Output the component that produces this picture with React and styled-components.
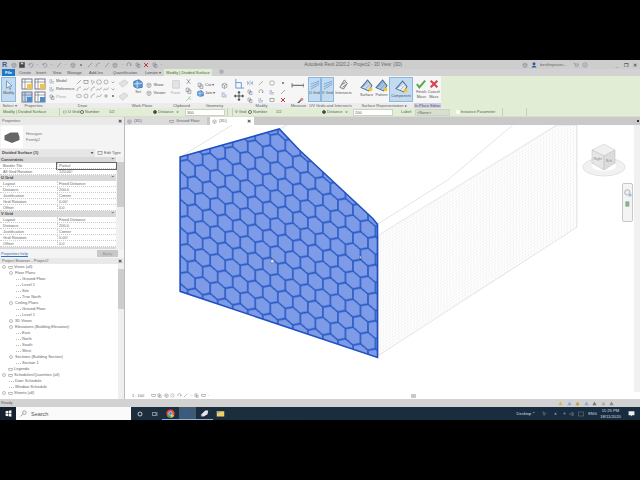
import React from 'react';
import styled, { createGlobalStyle } from 'styled-components';

const GlobalStyle = createGlobalStyle`
  html, body { margin: 0; padding: 0; background: #000; }
  * { box-sizing: border-box; }
`;

const Page = styled.div`
  width: 640px;
  height: 480px;
  background: #000;
  padding: 60px 0;
  overflow: hidden;
  font-family: "Liberation Sans", Arial, sans-serif;
  font-size: 4px;
  line-height: 6px;
  color: #5c5c5c;
`;

const Screen = styled.div`
  height: 360px;
  display: flex;
  flex-direction: column;
  background: #fff;
`;

/* title bar */
const TitleBar = styled.div`
  height: 9px;
  background: #cdcdcd;
  display: flex;
  align-items: center;
  padding: 0 2px;
  gap: 3px;
`;
const Logo = styled.span`
  font: bold 7px/9px "Liberation Sans", sans-serif;
  color: #2a5fa8;
  width: 6px;
`;
const Qat = styled.div`
  display: flex;
  align-items: center;
  gap: 2.5px;
  width: 292px;
`;
const WindowTitle = styled.div`
  width: 216px;
  font-size: 4.5px;
  color: #666;
  white-space: nowrap;
`;
const TitleRight = styled.div`
  display: flex;
  align-items: center;
  gap: 3px;
  flex: 1;
`;
const UserName = styled.span`
  width: 30px;
  white-space: nowrap;
  overflow: hidden;
  color: #666;
`;
const TitleGap = styled.span`
  width: 20px;
`;
const WindowButton = styled.span`
  width: 6px;
  text-align: center;
  font: bold 5px/8px "Liberation Sans", sans-serif;
  color: #555;
`;

/* ribbon tabs */
const TabRow = styled.div`
  height: 7px;
  background: #d2d2d2;
  display: flex;
  align-items: stretch;
  padding-left: 2px;
`;
const RibbonTab = styled.div`
  width: ${(p) => p.$w}px;
  text-align: center;
  line-height: 7px;
  white-space: nowrap;
  color: ${(p) => (p.$file ? '#fff' : '#555')};
  background: ${(p) => (p.$file ? '#1d78c8' : p.$context ? '#e2edd6' : 'transparent')};
  font-weight: ${(p) => (p.$file ? 'bold' : 'normal')};
`;

/* ribbon */
const Ribbon = styled.div`
  height: 32px;
  display: flex;
  background: #f6f6f6;
`;
const Panel = styled.div`
  width: ${(p) => p.$w}px;
  display: flex;
  flex-direction: column;
`;
const PanelBody = styled.div`
  flex: 1;
  display: flex;
  gap: ${(p) => p.$gap ?? 1}px;
  padding: 1px 1px 0;
  justify-content: ${(p) => p.$justify ?? 'flex-start'};
  overflow: hidden;
`;
const PanelTitle = styled.div`
  height: 5px;
  line-height: 5px;
  text-align: center;
  white-space: nowrap;
  color: #5c5c5c;
  background: ${(p) => (p.$editor ? '#cfcfe6' : '#ececec')};
`;
const RibbonRest = styled.div`
  flex: 1;
  background: #e2edd6;
`;
const BigTool = styled.div`
  width: ${(p) => p.$w}px;
  height: 25px;
  display: flex;
  flex-direction: column;
  align-items: center;
  gap: 1px;
  padding-top: 2px;
  text-align: center;
  line-height: 4.6px;
  font-size: 3.8px;
  color: #555;
  background: ${(p) => (p.$on ? '#c3dbf1' : 'transparent')};
  border: ${(p) => (p.$on ? '1px solid #8db8de' : '0')};
  white-space: pre-line;
`;
const IconGrid = styled.div`
  display: grid;
  grid-template-columns: repeat(${(p) => p.$cols}, ${(p) => p.$size}px);
  grid-auto-rows: ${(p) => p.$size}px;
  gap: ${(p) => p.$gap ?? 1}px ${(p) => p.$colGap ?? p.$gap ?? 1}px;
  align-content: start;
  padding-top: ${(p) => p.$top ?? 1}px;
`;
const SmallStack = styled.div`
  width: ${(p) => p.$w}px;
  display: flex;
  flex-direction: column;
  gap: 1.5px;
  padding-top: ${(p) => p.$top ?? 1}px;
`;
const SmallTool = styled.div`
  display: flex;
  align-items: center;
  gap: 1px;
  height: 6.5px;
  white-space: nowrap;
  color: ${(p) => (p.$dim ? '#aaa' : '#555')};
`;

/* options bar */
const OptionsBar = styled.div`
  height: 9px;
  background: #e2edd6;
  display: flex;
  align-items: center;
  padding-left: 3px;
  border-bottom: 1px solid #d5dfca;
`;
const OptText = styled.span`
  width: ${(p) => p.$w}px;
  padding-left: ${(p) => p.$pl ?? 0}px;
  white-space: nowrap;
  flex: none;
`;
const OptSep = styled.span`
  width: 1px;
  height: 8px;
  background: #c5cfbb;
  flex: none;
  margin: 0 ${(p) => p.$m ?? 3}px;
`;
const Radio = styled.span`
  width: 4px;
  height: 4px;
  border-radius: 50%;
  border: 1px solid #666;
  background: ${(p) => (p.$on ? '#333' : '#fff')};
  margin-right: 1px;
  flex: none;
`;
const OptInput = styled.span`
  width: ${(p) => p.$w}px;
  height: 7px;
  background: ${(p) => p.$bg ?? '#fff'};
  border: 1px solid #ccd3c4;
  line-height: 5px;
  padding-left: 1px;
  flex: none;
`;
const Check = styled.span`
  width: 3.5px;
  height: 3.5px;
  background: #fbfbf0;
  flex: none;
  margin-right: 1px;
`;

/* body */
const Body = styled.div`
  flex: 1;
  min-height: 0;
  display: flex;
`;
const Sidebar = styled.div`
  width: 125px;
  flex: none;
  display: flex;
  flex-direction: column;
  background: #f4f4f4;
  border-right: 1px solid #bbb;
`;
const SideHeader = styled.div`
  height: ${(p) => p.$h}px;
  flex: none;
  display: flex;
  align-items: center;
  justify-content: space-between;
  padding: 0 2px;
  background: #e9e9e9;
  color: #666;
`;
const CloseMark = styled.span`
  font: bold 5px/6px "Liberation Sans", sans-serif;
  color: #333;
`;
const TypeBox = styled.div`
  height: 23px;
  flex: none;
  display: flex;
  align-items: center;
  gap: 3px;
  padding-left: 1px;
`;
const TypePreview = styled.div`
  width: 22px;
  height: 22px;
  background: #fff;
  display: flex;
  align-items: center;
  justify-content: center;
`;
const TypeName = styled.div`
  flex: 1;
  color: #777;
`;
const InstanceRow = styled.div`
  height: 9px;
  flex: none;
  display: flex;
  align-items: center;
  gap: 2px;
  padding-right: 3px;
`;
const InstanceSelect = styled.div`
  width: 95px;
  height: 8px;
  display: flex;
  justify-content: space-between;
  align-items: center;
  padding: 0 2px;
  background: #e6e6e6;
  font-weight: bold;
  color: #444;
`;
const EditType = styled.div`
  display: flex;
  align-items: center;
  gap: 1px;
  white-space: nowrap;
`;
const PropsTable = styled.div`
  height: 92px;
  flex: none;
  display: flex;
  overflow: hidden;
`;
const PropsRows = styled.div`
  flex: 1;
  padding-right: 1px;
`;
const GroupRow = styled.div`
  height: 6px;
  line-height: 6px;
  padding-left: 1px;
  font-weight: bold;
  background: #d9d9d9;
  color: #444;
  display: flex;
  justify-content: space-between;
  padding-right: 2px;
`;
const PropRow = styled.div`
  height: 6px;
  display: grid;
  grid-template-columns: 57px 1fr;
  background: #fff;
  border-bottom: 1px dotted #ccc;
  line-height: 5.5px;
`;
const PropLabel = styled.span`
  padding-left: 3px;
  color: #666;
`;
const PropValue = styled.span`
  padding-left: 1px;
  color: #666;
  border-left: 1px dotted #ccc;
  outline: ${(p) => (p.$focus ? '1px solid #666' : 'none')};
`;
const Scroll = styled.div`
  width: ${(p) => p.$w}px;
  flex: none;
  background: #efefef;
  display: flex;
  flex-direction: column;
  align-items: stretch;
  justify-content: flex-start;
  padding-top: ${(p) => p.$top}px;
`;
const ScrollThumb = styled.div`
  height: ${(p) => p.$h}px;
  background: #cdcdcd;
`;
const ApplyRow = styled.div`
  height: 9px;
  flex: none;
  display: flex;
  align-items: center;
  justify-content: space-between;
  padding: 0 6px 0 1px;
  background: #f4f4f4;
`;
const HelpLink = styled.span`
  color: #2f6fc0;
  text-decoration: underline;
`;
const ApplyButton = styled.span`
  width: 21px;
  height: 7px;
  background: #c9c9c9;
  color: #999;
  text-align: center;
  line-height: 7px;
`;
const TreeWrap = styled.div`
  flex: 1;
  min-height: 0;
  display: flex;
  background: #fff;
`;
const Tree = styled.div`
  flex: 1;
`;
const TreeRow = styled.div`
  height: 6px;
  line-height: 6px;
  display: flex;
  align-items: center;
  gap: 1px;
  padding-left: ${(p) => [2, 9, 16][p.$depth]}px;
  white-space: nowrap;
  color: #666;
`;
const Expander = styled.span`
  width: 4px;
  height: 4px;
  border: 1px solid ${(p) => (p.$blank ? 'transparent' : '#bbb')};
  border-radius: 50%;
  flex: none;
  margin-right: 1px;
`;
const TreeBranch = styled.span`
  width: 5px;
  height: 1px;
  border-top: 1px dotted #bbb;
  flex: none;
`;

/* viewport */
const View = styled.div`
  flex: 1;
  position: relative;
  display: flex;
  flex-direction: column;
  min-width: 0;
`;
const ViewTabs = styled.div`
  height: 8px;
  flex: none;
  display: flex;
  background: #c9c9c9;
  position: relative;
`;
const ViewTab = styled.div`
  width: ${(p) => p.$w}px;
  margin-left: ${(p) => p.$ml ?? 0}px;
  display: flex;
  align-items: center;
  gap: 2px;
  padding-left: 2px;
  color: #666;
  white-space: nowrap;
  background: ${(p) => (p.$on ? '#fff' : '#dcdcdc')};
`;
const TabClose = styled.span`
  margin-left: auto;
  margin-right: 3px;
  font: bold 5px/6px "Liberation Sans", sans-serif;
  color: #333;
`;
const TabMenu = styled.span`
  position: absolute;
  right: 1px;
  top: 3px;
  width: 2px;
  height: 2px;
  background: #333;
`;
const Canvas = styled.div`
  flex: 1;
  min-height: 0;
  display: flex;
`;
const Drawing = styled.svg`
  flex: 1;
  min-width: 0;
  height: 100%;
  display: block;
`;
const VScroll = styled.div`
  width: 6px;
  flex: none;
  background: #f1f1f1;
`;
const ViewCubeBox = styled.svg`
  position: absolute;
  left: 454px;
  top: 23px;
  width: 50px;
  height: 40px;
`;
const NavBar = styled.div`
  position: absolute;
  left: 497px;
  top: 66px;
  width: 11px;
  height: 39px;
  background: #f4f4f4;
  border: 1px solid #c8c8c8;
  border-radius: 2px;
  display: flex;
  flex-direction: column;
  align-items: center;
  gap: 3px;
  padding-top: 5px;
`;
const ViewControl = styled.div`
  height: 7px;
  flex: none;
  display: flex;
  align-items: center;
  background: #fff;
  padding-left: 7px;
  gap: 1.5px;
`;
const ScaleLabel = styled.span`
  width: 17px;
  color: #666;
`;
const HThumb = styled.span`
  width: 5px;
  height: 4px;
  background: #c9c9c9;
  margin-left: 199px;
`;

/* status + taskbar */
const StatusBar = styled.div`
  height: 8px;
  flex: none;
  display: flex;
  align-items: center;
  justify-content: space-between;
  background: #d2d2d2;
  padding: 0 26px 0 1px;
`;
const StatusIcons = styled.div`
  display: flex;
  gap: 3.5px;
`;
const Taskbar = styled.div`
  height: 13px;
  flex: none;
  display: flex;
  align-items: stretch;
  background: linear-gradient(90deg, #1d2f3d, #182c40);
  color: #d5dde2;
`;
const StartButton = styled.div`
  width: 16px;
  display: flex;
  align-items: center;
  justify-content: center;
  background: #15222d;
`;
const SearchBox = styled.div`
  width: 115px;
  display: flex;
  align-items: center;
  gap: 4px;
  padding-left: 4px;
  background: #fafafa;
  color: #555;
  font-size: 5.5px;
`;
const TaskIcons = styled.div`
  display: flex;
  align-items: stretch;
  padding-left: 1px;
  width: 383px;
`;
const TaskIcon = styled.div`
  width: ${(p) => p.$w ?? 17}px;
  display: flex;
  align-items: center;
  justify-content: center;
  background: ${(p) => (p.$on ? '#3f5a72' : 'transparent')};
  border-bottom: ${(p) => (p.$open ? '1px solid #8ab4dc' : '0')};
`;
const Tray = styled.div`
  flex: 1;
  display: flex;
  align-items: center;
  white-space: nowrap;
`;
const TrayItem = styled.div`
  width: ${(p) => p.$w}px;
  display: flex;
  align-items: center;
  justify-content: center;
  flex: none;
`;
const Clock = styled.div`
  text-align: center;
  line-height: 5.5px;
  width: 25px;
  flex: none;
  font-size: 4.2px;
`;

/* small drawings */
const S = ({ size = 6, children, vb = 12 }) => (
  <svg width={size} height={size} viewBox={`0 0 ${vb} ${vb}`} fill="none" style={{ flex: 'none' }}>
    {children}
  </svg>
);

const glyphs = {
  line: <path d="M2 10 10 2" stroke="#666" />,
  rect: <rect x="2" y="3" width="8" height="6" stroke="#666" />,
  poly: <path d="M3 2h6l2 4-2 4H3L1 6z" stroke="#777" />,
  circle: <circle cx="6" cy="6" r="4" stroke="#777" />,
  arc: <path d="M2 10C2 5 6 2 10 2" stroke="#666" />,
  spline: <path d="M1 9c3-8 5 4 10-6" stroke="#666" />,
  ell: <ellipse cx="6" cy="6" rx="5" ry="3" stroke="#777" />,
  pick: <path d="M2 2l8 4-4 1-1 4z" stroke="#999" />,
  plus: <path d="M6 2v8M2 6h8" stroke="#666" />,
  chev: <path d="M3 5l3 3 3-3" stroke="#666" />,
  copy: <path d="M2 2h5v6H2zM5 5h5v6H5z" stroke="#778" />,
  cut: <path d="M3 2l6 8M9 2l-6 8" stroke="#666" />,
  match: <path d="M2 10l5-5 3 3M7 5l2-3" stroke="#6a6" />,
  mirror: <path d="M6 1v10M1 3l3 3-3 3zM11 3L8 6l3 3z" stroke="#6a8cb8" />,
  trim: <path d="M2 2v8h8M5 2v5h5" stroke="#6a8cb8" />,
  rotate: <path d="M3 8a4 4 0 1 1 6 0M9 8V5" stroke="#666" />,
  del: <path d="M2 2l8 8M10 2l-8 8" stroke="#c8323a" strokeWidth="2" />,
  dot: <rect x="4" y="4" width="4" height="4" fill="#8a8a8a" />,
  disk: <path d="M1 1h10v10H1z M3 1v4h6V1" fill="#444" stroke="#444" />,
  undo: <path d="M2 6a4 4 0 1 1 2 4M2 3v3h3" stroke="#778" />,
  box: <path d="M2 4l4-2 4 2v5l-4 2-4-2zM2 4l4 2 4-2M6 6v5" stroke="#778" />,
  cart: <path d="M1 2h2l2 6h5l1-4H4M5 10h1M9 10h1" stroke="#778" />,
  help: <g><circle cx="6" cy="6" r="4.5" stroke="#778" /><path d="M6 4v4" stroke="#778" /></g>,
};
const Glyph = ({ k, size }) => <S size={size}>{glyphs[k]}</S>;

const HexBlue = ({ size = 10 }) => (
  <S size={size}>
    <path d="M1 3l6-2 4 3v6l-6 1-4-2z" fill="#5d9ad6" stroke="#2f6cae" />
    <path d="M1 6l10-1M5 2v9" stroke="#d8e8f6" />
  </S>
);
const SurfaceIcon = ({ accent = '#f4c430', tint = '#cfdff0', size = 13 }) => (
  <S size={size}>
    <path d="M1 8l6-7 4 5-3 5z" fill={tint} stroke="#4a6f9c" />
    <path d="M3 7l5-4M5 9l4-4" stroke="#6c8cb0" strokeWidth=".6" />
    <circle cx="9.6" cy="9.6" r="1.8" fill={accent} />
  </S>
);
const GridWave = ({ size = 10 }) => (
  <S size={size}>
    <path d="M1 5c3-1 6-2 10-4M1 8c3-1 6-3 10-5M1 11c3-2 6-3 10-6" stroke="#5b8fc4" strokeWidth=".8" />
  </S>
);
const TagIcon = ({ blue, on, size = 12 }) => (
  <S size={size}>
    <rect x="1" y="1" width="10" height="10" fill={on ? '#bcd6ee' : '#fff'} stroke="#778" />
    <path d="M1 4h10M4 1v10" stroke="#778" strokeWidth=".7" />
    <rect x="6" y="6" width="5" height="5" fill={blue ? '#4f8cd0' : '#ecc44a'} />
  </S>
);
const ModifyArrow = () => (
  <S size={10}>
    <path d="M3 1v9l2.4-2 1.6 3.4 1.2-.6-1.6-3.2 3-.4z" fill="#eaf3fb" stroke="#5577a0" strokeWidth=".8" />
  </S>
);
const Star = ({ color }) => (
  <S size={5}>
    <path d="M6 1l5 9H1z" fill={color} />
  </S>
);

/* data */
const drawShapes = ['line', 'rect', 'pick', 'poly', 'circle', 'chev', 'arc', 'spline', 'arc', 'spline', 'spline', 'chev', 'ell', 'circle', 'arc', 'spline', 'plus', 'dot'];
const modifyTools = ['mirror', 'line', 'poly', 'dot', 'copy', 'rotate', 'trim', 'line', 'copy', 'trim', 'rect', 'del'];

const qatIcons = ['box', 'disk', 'undo', 'chev', 'undo', 'chev', 'line', 'chev', 'box', 'dot', 'line', 'arc', 'line', 'box', 'chev', 'rotate', 'copy', 'del', 'copy', 'chev'];

const tabs = [['Create', 16], ['Insert', 16], ['View', 16], ['Manage', 19], ['Add-Ins', 24], ['Quantification', 34], ['Lumion ▾', 22]];

const propGroups = [
  { id: 'c', name: 'Constraints', rows: [['Border Tile', 'Partial', true], ['All Grid Rotation', '120.00°']] },
  { id: 'u', name: 'U Grid', rows: [['Layout', 'Fixed Distance'], ['Distance', '200.0'], ['Justification', 'Center'], ['Grid Rotation', '0.00°'], ['Offset', '0.0']] },
  { id: 'v', name: 'V Grid', rows: [['Layout', 'Fixed Distance'], ['Distance', '200.0'], ['Justification', 'Center'], ['Grid Rotation', '0.00°'], ['Offset', '0.0']] },
  { id: 'end', name: '', rows: [] },
];

const tree = [
  [0, 'Views (all)', 'x'], [1, 'Floor Plans', 'x'], [2, 'Ground Floor'], [2, 'Level 1'], [2, 'Site'], [2, 'True North'],
  [1, 'Ceiling Plans', 'x'], [2, 'Ground Floor'], [2, 'Level 1'], [1, '3D Views', 'x'], [1, 'Elevations (Building Elevation)', 'x'],
  [2, 'East'], [2, 'North'], [2, 'South'], [2, 'West'], [1, 'Sections (Building Section)', 'x'], [2, 'Section 1'],
  [0, 'Legends', 'i'], [0, 'Schedules/Quantities (all)', 'x'], [1, 'Door Schedule'], [1, 'Window Schedule'], [0, 'Sheets (all)', 'x'],
];

const viewIcons = ['rect', 'copy', 'box', 'circle', 'rotate', 'line', 'chev', 'copy', 'rect', 'chev'];

function Model() {
  const face = '181,157 280,129 300,150 373,218 378,224 378,357 181,291';
  const side = '379,235 557,125 577,125 577,227 379,355';
  return (
    <Drawing viewBox="126 125 508 267" preserveAspectRatio="xMinYMin slice">
      <defs>
        <pattern id="hex" width="15" height="28" patternUnits="userSpaceOnUse" patternTransform="translate(181 157) skewY(18.5)">
          <path d="M7.500 0 15 4V14L7.500 18 0 14V4ZM7.500 18V28" fill="none" stroke="#2456c4" strokeWidth="1.5" />
        </pattern>
        <pattern id="dots" width="3" height="3" patternUnits="userSpaceOnUse" patternTransform="skewY(-32)">
          <path d="M0 0h3M0 0v3" stroke="#dedede" strokeWidth=".5" />
        </pattern>
        <clipPath id="faceClip">
          <polygon points={face} />
        </clipPath>
      </defs>
      <path d="M181 157 233 125M280 129 288 125M378 224 448 180 513 125" stroke="#d8d8d8" strokeWidth=".7" fill="none" />
      <polygon points={side} fill="url(#dots)" stroke="#d4d4d4" strokeWidth=".6" />
      <polygon points={face} fill="#7d9be6" />
      <rect x="175" y="125" width="210" height="240" fill="url(#hex)" clipPath="url(#faceClip)" />
      <polygon points={face} fill="none" stroke="#1f51c4" strokeWidth="1.6" />
      <circle cx="273" cy="261" r="1.8" fill="#dfe6f5" stroke="#555" strokeWidth=".5" />
      <circle cx="361" cy="257" r="1" fill="#eef" stroke="#555" strokeWidth=".4" />
    </Drawing>
  );
}

export default function App() {
  return (
    <Page>
      <GlobalStyle />
      <Screen>
        <TitleBar>
          <Logo>R</Logo>
          <Qat>
            {qatIcons.map((k, i) => (
              <Glyph key={i} k={k} size={k === 'chev' ? 3 : 6} />
            ))}
          </Qat>
          <WindowTitle>Autodesk Revit 2020.2 - Project2 - 3D View: {'{3D}'}</WindowTitle>
          <TitleRight>
            <Glyph k="box" size={6} />
            <S size={6}>
              <circle cx="6" cy="3.5" r="3" fill="#34589c" />
              <path d="M1 11c1-5 9-5 10 0z" fill="#34589c" />
            </S>
            <UserName>bestfreptuser...</UserName>
            <Glyph k="cart" size={6} />
            <Glyph k="help" size={6} />
            <TitleGap />
            <WindowButton>_</WindowButton>
            <WindowButton>❐</WindowButton>
            <WindowButton>✕</WindowButton>
          </TitleRight>
        </TitleBar>

        <TabRow>
          <RibbonTab $file $w={13}>File</RibbonTab>
          <RibbonTab $w={2} />
          {tabs.map(([name, w]) => (
            <RibbonTab key={name} $w={w}>{name}</RibbonTab>
          ))}
          <RibbonTab $context $w={48}>Modify | Divided Surface</RibbonTab>
          <RibbonTab $w={7} />
          <Glyph k="box" size={5} />
        </TabRow>

        <Ribbon>
          <Panel $w={19}>
            <PanelBody>
              <BigTool $on $w={15}>
                <ModifyArrow />
                Modify
              </BigTool>
            </PanelBody>
            <PanelTitle>Select ▾</PanelTitle>
          </Panel>
          <Panel $w={29}>
            <PanelBody $justify="center">
              <IconGrid $cols={2} $size={12}>
                <TagIcon />
                <TagIcon />
                <TagIcon blue on />
                <TagIcon blue />
              </IconGrid>
            </PanelBody>
            <PanelTitle>Properties</PanelTitle>
          </Panel>
          <Panel $w={69}>
            <PanelBody $gap={2}>
              <SmallStack $w={25}>
                <SmallTool><Glyph k="trim" size={6} />Model</SmallTool>
                <SmallTool><Glyph k="trim" size={6} />Reference</SmallTool>
                <SmallTool $dim><Glyph k="copy" size={6} />Plane</SmallTool>
              </SmallStack>
              <IconGrid $cols={6} $size={6} $gap={.8} $top={2}>
                {drawShapes.map((k, i) => (
                  <Glyph key={i} k={k} size={6} />
                ))}
              </IconGrid>
            </PanelBody>
            <PanelTitle>Draw</PanelTitle>
          </Panel>
          <Panel $w={50}>
            <PanelBody $gap={2}>
              <SmallStack $w={12}>
                <S size={11}><path d="M1 6l6-4 4 3-6 5z" fill="#e2e2e2" stroke="#d0d0d0" /></S>
                <S size={11}><path d="M1 6l6-4 4 3-6 5z" fill="#e2e2e2" stroke="#d0d0d0" /></S>
              </SmallStack>
              <BigTool $w={13}>
                <HexBlue />
                Set
              </BigTool>
              <SmallStack $w={20} $top={5}>
                <SmallTool><Glyph k="box" size={6} />Show</SmallTool>
                <SmallTool><Glyph k="box" size={6} />Viewer</SmallTool>
              </SmallStack>
            </PanelBody>
            <PanelTitle>Work Plane</PanelTitle>
          </Panel>
          <Panel $w={29}>
            <PanelBody $gap={4} $justify="center">
              <BigTool $w={11}>
                <S size={10}><path d="M2 2h8v9H2z" fill="#e4e4e4" stroke="#ccc" /></S>
                <SmallTool $dim>Paste</SmallTool>
              </BigTool>
              <SmallStack $w={8}>
                <Glyph k="cut" size={7} />
                <Glyph k="copy" size={7} />
                <Glyph k="match" size={7} />
              </SmallStack>
            </PanelBody>
            <PanelTitle>Clipboard</PanelTitle>
          </Panel>
          <Panel $w={37}>
            <PanelBody $gap={2}>
              <SmallStack $w={22} $top={5}>
                <SmallTool><Glyph k="copy" size={7} />Cut ▾</SmallTool>
                <SmallTool><HexBlue size={7} />Join ▾</SmallTool>
              </SmallStack>
              <SmallStack $w={8} $top={5}>
                <Glyph k="box" size={7} />
                <Glyph k="trim" size={7} />
              </SmallStack>
            </PanelBody>
            <PanelTitle>Geometry</PanelTitle>
          </Panel>
          <Panel $w={57}>
            <PanelBody $gap={2}>
              <SmallStack $w={11}>
                <S size={11}><path d="M2 1v10h9M2 5h6v6" stroke="#5f96d4" /></S>
                <S size={10}>
                  <path d="M6 1v10M1 6h10" stroke="#333" />
                  <path d="M6 0l2 2H4zM6 12l2-2H4zM0 6l2 2V4zM12 6l-2 2V4z" fill="#333" />
                </S>
              </SmallStack>
              <IconGrid $cols={4} $size={6} $gap={2.5} $colGap={5} $top={3}>
                {modifyTools.map((k, i) => (
                  <Glyph key={i} k={k} size={6} />
                ))}
              </IconGrid>
            </PanelBody>
            <PanelTitle>Modify</PanelTitle>
          </Panel>
          <Panel $w={17}>
            <PanelBody>
              <SmallStack $w={15} $top={4}>
                <S size={13}><path d="M1 4h11M1 2v4M12 2v4" stroke="#777" /></S>
                <S size={13}><path d="M2 11l8-8" stroke="#555" strokeWidth="1.2" /><circle cx="10" cy="3" r="1.4" fill="#d88" /></S>
              </SmallStack>
            </PanelBody>
            <PanelTitle>Measure</PanelTitle>
          </Panel>
          <Panel $w={47}>
            <PanelBody $gap={0}>
              <BigTool $on $w={13}>
                <GridWave />
                U Grid
              </BigTool>
              <BigTool $on $w={13}>
                <GridWave />
                V Grid
              </BigTool>
              <BigTool $w={19}>
                <S size={11}><path d="M2 9l5-8 3 4-4 6zM4 6l4-2M5 9l4-3" stroke="#777" fill="#eee" /></S>
                Intersects
              </BigTool>
            </PanelBody>
            <PanelTitle>UV Grids and Intersects</PanelTitle>
          </Panel>
          <Panel $w={60}>
            <PanelBody $gap={1} $justify="flex-end">
              <BigTool $w={15}>
                <SurfaceIcon />
                Surface
              </BigTool>
              <BigTool $w={13}>
                <SurfaceIcon tint="#a9c8ea" />
                Pattern
              </BigTool>
              <BigTool $on $w={24}>
                <SurfaceIcon tint="#eef3f8" />
                Component
              </BigTool>
            </PanelBody>
            <PanelTitle>Surface Representation ▸</PanelTitle>
          </Panel>
          <Panel $w={27}>
            <PanelBody $gap={0}>
              <BigTool $w={13}>
                <S size={10}><path d="M1 6l3 4 7-8" stroke="#5aa54a" strokeWidth="2.4" /></S>
                {'Finish\nMass'}
              </BigTool>
              <BigTool $w={13}>
                <S size={10}><path d="M2 2l8 8M10 2l-8 8" stroke="#d8444a" strokeWidth="2.6" /></S>
                {'Cancel\nMass'}
              </BigTool>
            </PanelBody>
            <PanelTitle $editor>In-Place Editor</PanelTitle>
          </Panel>
          <RibbonRest />
        </Ribbon>

        <OptionsBar>
          <OptText $w={53}>Modify | Divided Surface</OptText>
          <OptSep />
          <Glyph k="rect" size={4} />
          <OptText $w={13} $pl={1}>U Grid</OptText>
          <Radio />
          <OptText $w={24}>Number</OptText>
          <OptText $w={44}>1/2</OptText>
          <Radio $on />
          <OptText $w={18}>Distance</OptText>
          <OptText $w={9}>∨</OptText>
          <OptInput $w={40}>300</OptInput>
          <OptSep $m={2} />
          <OptSep $m={2} />
          <OptText $w={13}>V Grid</OptText>
          <Radio />
          <OptText $w={23}>Number</OptText>
          <OptText $w={46}>1/2</OptText>
          <Radio $on />
          <OptText $w={18}>Distance</OptText>
          <OptText $w={8}>∨</OptText>
          <OptInput $w={40}>200</OptInput>
          <OptText $w={22} $pl={8}>Label:</OptText>
          <OptInput $w={35} $bg="#d8dfd0">&lt;None&gt;</OptInput>
          <OptText $w={6} />
          <Check />
          <OptText $w={38}>Instance Parameter</OptText>
          <OptSep />
          <OptSep $m={20} />
        </OptionsBar>

        <Body>
          <Sidebar>
            <SideHeader $h={8}>
              Properties
              <CloseMark>✕</CloseMark>
            </SideHeader>
            <TypeBox>
              <TypePreview>
                <S size={18}>
                  <path d="M1 5l4-2h5l1 3v2l-5 2-5-2z" fill="#666" />
                </S>
              </TypePreview>
              <TypeName>
                Hexagon
                <br />
                Family2
              </TypeName>
            </TypeBox>
            <InstanceRow>
              <InstanceSelect>
                Divided Surface (1)
                <span>▾</span>
              </InstanceSelect>
              <EditType>
                <Glyph k="rect" size={6} />
                Edit Type
              </EditType>
            </InstanceRow>
            <PropsTable>
              <PropsRows>
                {propGroups.map((g) => (
                  <React.Fragment key={g.id}>
                    <GroupRow>
                      {g.name}
                      {g.name && <span>⌃</span>}
                    </GroupRow>
                    {g.rows.map(([label, value, focus]) => (
                      <PropRow key={label}>
                        <PropLabel>{label}</PropLabel>
                        <PropValue $focus={focus}>{value}</PropValue>
                      </PropRow>
                    ))}
                  </React.Fragment>
                ))}
              </PropsRows>
              <Scroll $w={7} $top={5}>
                <ScrollThumb $h={45} />
              </Scroll>
            </PropsTable>
            <ApplyRow>
              <HelpLink>Properties help</HelpLink>
              <ApplyButton>Apply</ApplyButton>
            </ApplyRow>
            <SideHeader $h={6}>
              Project Browser - Project2
              <CloseMark>✕</CloseMark>
            </SideHeader>
            <TreeWrap>
              <Tree>
                {tree.map(([depth, label, kind], i) => (
                  <TreeRow key={i} $depth={depth}>
                    {kind === 'x' && <Expander />}
                    {kind === 'x' && depth === 0 && <Glyph k="rect" size={5} />}
                    {kind === 'i' && <Expander $blank />}
                    {kind === 'i' && <Glyph k="rect" size={5} />}
                    {!kind && <TreeBranch />}
                    {label}
                  </TreeRow>
                ))}
              </Tree>
              <Scroll $w={6} $top={5}>
                <ScrollThumb $h={40} />
              </Scroll>
            </TreeWrap>
          </Sidebar>

          <View>
            <ViewTabs>
              <ViewTab $w={42}>
                <Glyph k="box" size={5} />
                {'{3D}'}
              </ViewTab>
              <ViewTab $w={40}>
                <Glyph k="rect" size={5} />
                Ground Floor
              </ViewTab>
              <ViewTab $on $w={44} $ml={3}>
                <Glyph k="box" size={5} />
                {'{3D}'}
                <TabClose>✕</TabClose>
              </ViewTab>
              <TabMenu />
            </ViewTabs>
            <Canvas>
              <Model />
              <VScroll />
            </Canvas>
            <ViewCubeBox viewBox="0 0 50 40">
              <ellipse cx="25" cy="27" rx="21" ry="9" fill="#f1f1f1" stroke="#e2e2e2" />
              <ellipse cx="25" cy="26" rx="12" ry="5" fill="#fff" />
              <path d="M13 10l12-6 11 6-11 6z" fill="#f0f0f0" stroke="#c8c8c8" strokeWidth=".5" />
              <path d="M13 10l12 6v14l-12-7z" fill="#e6e6e6" stroke="#bbb" strokeWidth=".5" />
              <path d="M36 10 25 16v14l11-7z" fill="#dcdcdc" stroke="#bbb" strokeWidth=".5" />
              <text x="14.5" y="20" fontSize="3.6" fill="#888" fontFamily="Liberation Sans">Right</text>
              <text x="27" y="22" fontSize="3.6" fill="#888" fontFamily="Liberation Sans">Bck</text>
            </ViewCubeBox>
            <NavBar>
              <S size={8}>
                <circle cx="5" cy="5" r="4" fill="#eee" stroke="#999" />
                <circle cx="9" cy="9" r="2.5" fill="#9cc3e6" />
              </S>
              <S size={8}>
                <rect x="2" y="2" width="6" height="8" fill="#8fae8f" />
              </S>
            </NavBar>
            <ViewControl>
              <ScaleLabel>1 : 100</ScaleLabel>
              {viewIcons.map((k, i) => (
                <Glyph key={i} k={k} size={k === 'chev' ? 3 : 5} />
              ))}
              <HThumb />
            </ViewControl>
          </View>
        </Body>

        <StatusBar>
          Ready
          <StatusIcons>
            <Star color="#e0b040" />
            <Star color="#88a8d0" />
            <Star color="#d89040" />
            <Star color="#88a8d0" />
            <Star color="#777" />
            <Star color="#aaa" />
            <Star color="#888" />
          </StatusIcons>
        </StatusBar>

        <Taskbar>
          <StartButton>
            <S size={7}>
              <path d="M1 2l4.500-.6V5.500H1zM6.500 1.200 11 .6V5.500H6.500zM1 6.500h4.500v4L1 10zM6.500 6.500H11v5l-4.500-.6z" fill="#fff" />
            </S>
          </StartButton>
          <SearchBox>
            <S size={7}><circle cx="7.500" cy="4.500" r="3" stroke="#666" /><path d="M5 7l-4 4" stroke="#666" /></S>
            Search
          </SearchBox>
          <TaskIcons>
            <TaskIcon $w={15}>
              <S size={6}><circle cx="6" cy="6" r="4" stroke="#eee" strokeWidth="1.6" /></S>
            </TaskIcon>
            <TaskIcon $w={15}>
              <S size={6}><path d="M1 3h7v6H1zM10 2v8" stroke="#eee" /></S>
            </TaskIcon>
            <TaskIcon $open>
              <S size={9}>
                <circle cx="6" cy="6" r="5.500" fill="#e14c3c" />
                <path d="M6 6 1 9a5.500 5.500 0 0 0 6 2.500z" fill="#3fa45b" />
                <path d="M6 6l5 2.500A5.500 5.500 0 0 1 7 11.500z" fill="#f2c230" />
                <circle cx="6" cy="6" r="2.400" fill="#3f7fe0" stroke="#fff" strokeWidth=".7" />
              </S>
            </TaskIcon>
            <TaskIcon $on $open>
              <Logo>R</Logo>
            </TaskIcon>
            <TaskIcon $open>
              <S size={9}>
                <path d="M1 8l6-6h4l-1 5-5 3H2z" fill="#e6e6ee" />
                <path d="M1 8l4 2-2 1z" fill="#c64050" />
              </S>
            </TaskIcon>
            <TaskIcon $w={15}>
              <S size={9}>
                <path d="M1 3h10v7H1z" fill="#f0d060" />
                <path d="M1 3h4v2H1z" fill="#7aa7d8" />
              </S>
            </TaskIcon>
          </TaskIcons>
          <Tray>
            <TrayItem $w={24}>Desktop ⌃</TrayItem>
            <TrayItem $w={12}><Glyph k="pick" size={5} /></TrayItem>
            <TrayItem $w={10}>∧</TrayItem>
            <TrayItem $w={8}><Glyph k="dot" size={5} /></TrayItem>
            <TrayItem $w={7}>◁)</TrayItem>
            <TrayItem $w={12}><Glyph k="rect" size={8} /></TrayItem>
            <TrayItem $w={11}>ENG</TrayItem>
            <Clock>
              11:25 PM
              <br />
              18/11/2020
            </Clock>
            <TrayItem $w={17}>
              <S size={7}><path d="M1 2h10v7H7l-2 2V9H1z" fill="#eee" /></S>
            </TrayItem>
          </Tray>
        </Taskbar>
      </Screen>
    </Page>
  );
}
